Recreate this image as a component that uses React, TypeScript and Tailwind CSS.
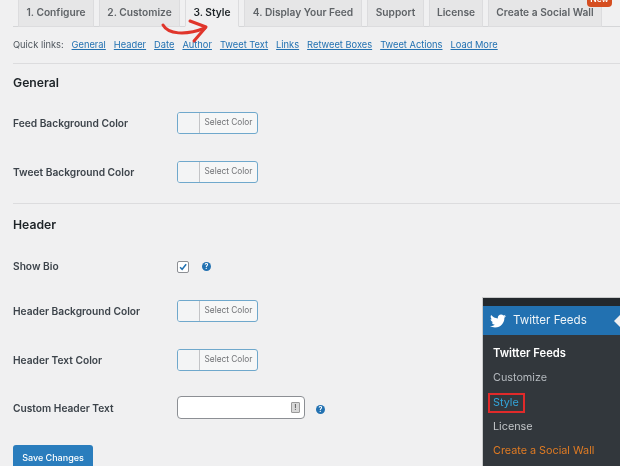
import { FaTwitter } from "react-icons/fa";

const font = "font-['Inter','Liberation_Sans',sans-serif]";

const tabs = [
  { label: "1. Configure", width: "w-[76px]" },
  { label: "2. Customize", width: "w-[81px]" },
  { label: "3. Style", width: "w-[54px]", active: true },
  { label: "4. Display Your Feed", width: "w-[118px]" },
  { label: "Support", width: "w-[57px]" },
  { label: "License", width: "w-[54px]" },
  { label: "Create a Social Wall", width: "w-[114px]", isNew: true },
];

const quickLinks = ["General", "Header", "Date", "Author", "Tweet Text", "Links", "Retweet Boxes", "Tweet Actions", "Load More"];

function HelpIcon() {
  return (
    <span className="flex h-[9px] w-[9px] items-center justify-center rounded-full bg-[#2271b1] text-[7px] font-bold leading-none text-white">
      ?
    </span>
  );
}

function ColorPicker({ className }: { className: string }) {
  return (
    <div className={`flex h-[22px] w-[81px] overflow-hidden rounded-[3px] border border-[#6fa8cc] bg-[#f6f7f7] ${className}`}>
      <div className="w-[22px] border-r border-[#c3c4c7] bg-[#f3f4f5]" />
      <div className="flex flex-1 items-center justify-center pb-[1px] text-[8.3px] text-[#6f7174]">Select Color</div>
    </div>
  );
}

function Row({ label, height, children }: { label: string; height: string; children: React.ReactNode }) {
  return (
    <div className={`flex items-center ${height}`}>
      <div className="w-[164px] text-[10.2px] font-semibold text-[#3c434a]">{label}</div>
      {children}
    </div>
  );
}

export default function App() {
  return (
    <div className={`relative h-[466px] w-[620px] overflow-hidden bg-[#f0f0f1] blur-[0.4px] ${font}`}>
      <div className="ml-[13px] flex h-[27px] gap-[5px] border-b border-[#d5d6d8] pl-[5px]">
        {tabs.map((t) => (
          <div
            key={t.label}
            className={`relative flex h-[27px] shrink-0 items-center justify-center border border-t-0 border-[#dcdcde] text-[10.2px] font-semibold ${t.width} ${
              t.active ? "border-b-[#f0f0f1] bg-[#f0f0f1] text-[#1d2327]" : "bg-[#e6e6e7] text-[#5f6367]"
            }`}
          >
            {t.label}
            {t.isNew && (
              <span className="absolute right-[-11px] top-[-8px] flex h-[15px] w-[25px] items-center justify-center rounded-[4px] bg-[#d54e21] text-[8.5px] text-white">
                New
              </span>
            )}
          </div>
        ))}
      </div>

      <div className="ml-[13px] flex h-[37px] items-center border-b border-[#dcdcde] text-[9.3px]">
        <span className="mr-[8px] text-[#50575e]">Quick links:</span>
        <div className="flex gap-[8px]">
          {quickLinks.map((l) => (
            <span key={l} className="text-[#2271b1] underline">{l}</span>
          ))}
        </div>
      </div>

      <div className="ml-[13px]">
        <h2 className="flex h-[35px] items-center pt-[3px] text-[12.2px] font-semibold text-[#1d2327]">General</h2>
        <Row label="Feed Background Color" height="h-[49px]"><ColorPicker className="mb-[1px]" /></Row>
        <Row label="Tweet Background Color" height="h-[49px]"><ColorPicker className="mb-[1px]" /></Row>
        <div className="mt-[6px] border-t border-[#dcdcde]" />
        <h2 className="flex h-[40px] items-center pt-[2px] text-[12.2px] font-semibold text-[#1d2327]">Header</h2>
        <Row label="Show Bio" height="h-[44px] pt-[2px]">
          <div className="flex h-[12px] w-[12px] items-center justify-center rounded-[2px] border border-[#8c8f94] bg-white">
            <svg viewBox="0 0 12 12" className="h-[10px] w-[10px]" fill="none" stroke="#2271b1" strokeWidth="1.8">
              <path d="M2.5 6.2 5 8.8 9.8 2.8" />
            </svg>
          </div>
          <span className="ml-[13px] mt-[-1px]"><HelpIcon /></span>
        </Row>
        <Row label="Header Background Color" height="h-[49px] mt-[-1px]"><ColorPicker className="mb-[2px]" /></Row>
        <Row label="Header Text Color" height="h-[49px]"><ColorPicker className="mb-[2px]" /></Row>
        <Row label="Custom Header Text" height="h-[48px]">
          <div className="mb-[3px] flex h-[23px] w-[128px] items-center justify-end rounded-[4px] border border-[#8c8f94] bg-white pr-[4px]">
            <div className="flex h-[11px] w-[9px] items-center justify-center rounded-[1px] border border-[#9a9a9a] bg-[#d8d8d8] text-[7px] font-bold leading-none text-[#666]">!</div>
          </div>
          <span className="ml-[11px]"><HelpIcon /></span>
        </Row>
        <div className="mt-[12px] flex h-[26px] w-[80px] items-center justify-center rounded-t-[3px] bg-[#2a7dbd] text-[9px] font-medium text-white">Save Changes</div>
      </div>

      {/* annotation arrow over the tabs */}
      <svg className="absolute left-[155px] top-[15px]" width="60" height="32" viewBox="0 0 60 32" fill="none" stroke="#e0352b" strokeWidth="3" strokeLinecap="round" strokeLinejoin="round">
        <path d="M8 10C13 19 30 21 50 13" />
        <path d="M35 6 51 12 39 26" />
      </svg>

      {/* admin menu screenshot laid over the page */}
      <div className="absolute left-[482px] top-[297px] h-[169px] w-[138px] border-l border-t border-[#c9cacb] bg-[#32373c]">
        <div className="h-[8px] bg-[#23282d]" />
        <div className="relative flex h-[29px] items-center bg-[#2271b1] pl-[7px] text-[11.6px] text-[#eef4f8]">
          <FaTwitter size={16} color="#fff" />
          <span className="ml-[7px]">Twitter Feeds</span>
          <span className="absolute right-0 top-[9px] h-0 w-0 border-y-[6px] border-r-[6px] border-y-transparent border-r-[#f0f0f1]" />
        </div>
        <div className="flex flex-col pl-[10px] pt-[6px] text-[10.8px] leading-[24.3px]">
          <span className="mb-[1px] text-[11.2px] font-semibold text-white">Twitter Feeds</span>
          <span className="text-[#b4b9be]">Customize</span>
          <span className="relative text-[#33a4d8]">
            Style
            <span className="absolute left-[-5px] top-[2px] h-[20px] w-[37px] border-2 border-[#e02a2a]" />
          </span>
          <span className="text-[#c3c6c9]">License</span>
          <span className="text-[#e07b23]">Create a Social Wall</span>
        </div>
      </div>
    </div>
  );
}
